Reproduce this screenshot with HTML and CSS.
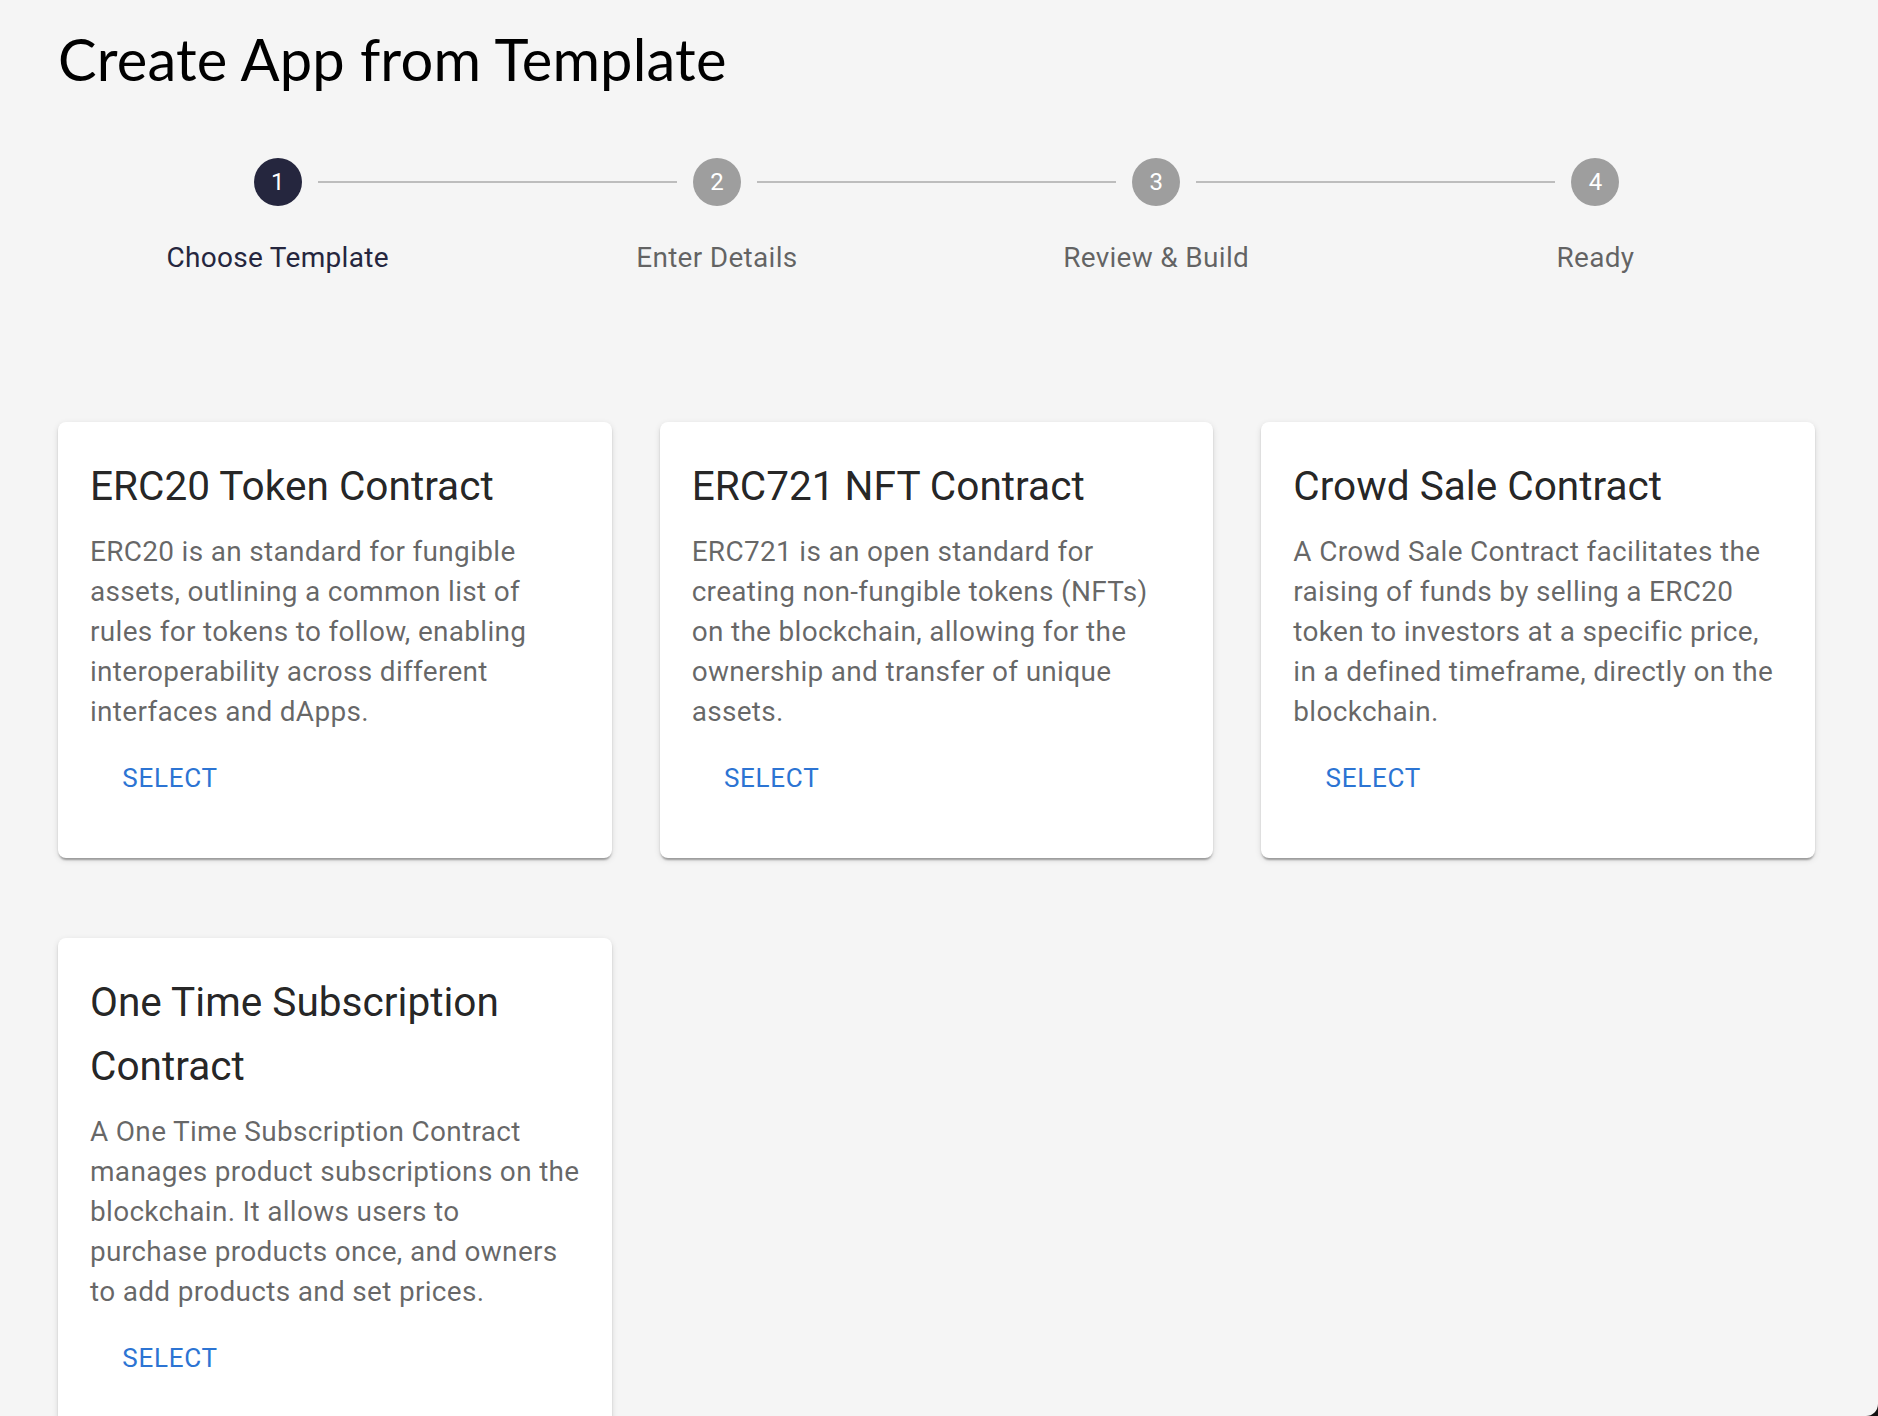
FILE: index.html
```html
<!DOCTYPE html>
<html lang="en">
<head>
<meta charset="utf-8">
<title>Create App from Template</title>
<link rel="stylesheet" href="styles.css">
</head>
<body>
<main class="page">
  <h1 class="page-title">Create App from Template</h1>

  <ol class="stepper">
    <li class="step step-active">
      <span class="step-icon">1</span>
      <span class="step-label">Choose Template</span>
    </li>
    <li class="step">
      <span class="step-connector"></span>
      <span class="step-icon">2</span>
      <span class="step-label">Enter Details</span>
    </li>
    <li class="step">
      <span class="step-connector"></span>
      <span class="step-icon">3</span>
      <span class="step-label">Review &amp; Build</span>
    </li>
    <li class="step">
      <span class="step-connector"></span>
      <span class="step-icon">4</span>
      <span class="step-label">Ready</span>
    </li>
  </ol>

  <section class="cards">
    <article class="card">
      <div class="card-content">
        <h2 class="card-title">ERC20 Token Contract</h2>
        <p class="card-text">ERC20 is an standard for fungible assets, outlining a common list of rules for tokens to follow, enabling interoperability across different interfaces and dApps.</p>
        <div class="card-actions"><button class="btn-select" type="button">Select</button></div>
      </div>
    </article>
    <article class="card">
      <div class="card-content">
        <h2 class="card-title">ERC721 NFT Contract</h2>
        <p class="card-text">ERC721 is an open standard for creating non-fungible tokens (NFTs) on the blockchain, allowing for the ownership and transfer of unique assets.</p>
        <div class="card-actions"><button class="btn-select" type="button">Select</button></div>
      </div>
    </article>
    <article class="card">
      <div class="card-content">
        <h2 class="card-title">Crowd Sale Contract</h2>
        <p class="card-text">A Crowd Sale Contract facilitates the raising of funds by selling a ERC20 token to investors at a specific price, in a defined timeframe, directly on the blockchain.</p>
        <div class="card-actions"><button class="btn-select" type="button">Select</button></div>
      </div>
    </article>
    <article class="card">
      <div class="card-content">
        <h2 class="card-title">One Time Subscription Contract</h2>
        <p class="card-text">A One Time Subscription Contract manages product subscriptions on the blockchain. It allows users to purchase products once, and owners to add products and set prices.</p>
        <div class="card-actions"><button class="btn-select" type="button">Select</button></div>
      </div>
    </article>
  </section>
</main>
<div class="window-corner"></div>
</body>
</html>
```

FILE: styles.css
```css
* { box-sizing: border-box; }

html, body {
  margin: 0;
  padding: 0;
  background: #f5f5f5;
}

body {
  font-family: Roboto, "Liberation Sans", Arial, sans-serif;
  color: rgba(0, 0, 0, 0.87);
  overflow: hidden;
  height: 1416px;
}

.page {
  width: 1757px;
  margin-left: 58px;
  padding-top: 21px;
}

.page-title {
  margin: 0;
  font-family: Lato, "Noto Sans", sans-serif;
  font-weight: 400;
  font-size: 57.8px;
  line-height: 76px;
  color: #000;
  letter-spacing: 0.2px;
}

/* Stepper */
.stepper {
  list-style: none;
  margin: 61px 0 0;
  padding: 0;
  display: grid;
  grid-template-columns: repeat(4, 1fr);
}

.step {
  position: relative;
  display: flex;
  flex-direction: column;
  align-items: center;
}

.step-connector {
  position: absolute;
  top: 23px;
  left: calc(-50% + 40px);
  right: calc(50% + 40px);
  height: 2px;
  background: #bdbdbd;
}

.step-icon {
  width: 48px;
  height: 48px;
  border-radius: 50%;
  background: #9e9e9e;
  color: #fff;
  font-size: 24px;
  line-height: 48px;
  text-align: center;
}

.step-label {
  margin-top: 32px;
  font-size: 28px;
  line-height: 40px;
  color: rgba(0, 0, 0, 0.6);
  letter-spacing: 0.3px;
}

.step-active .step-icon {
  background: #25263e;
}

.step-active .step-label {
  color: #25263e;
}

/* Cards */
.cards {
  margin-top: 144px;
  display: grid;
  grid-template-columns: repeat(3, 1fr);
  column-gap: 48px;
  row-gap: 80px;
  align-items: start;
}

.card {
  background: #fff;
  border-radius: 8px;
  box-shadow: 0 4px 2px -2px rgba(0, 0, 0, 0.2), 0 2px 2px 0 rgba(0, 0, 0, 0.14), 0 2px 6px 0 rgba(0, 0, 0, 0.12);
}

.card-content {
  padding: 32px;
}

.card-title {
  margin: 0 0 14px;
  font-size: 40.6px;
  line-height: 64px;
  font-weight: 400;
  color: rgba(0, 0, 0, 0.87);
}

.card-text {
  margin: 0;
  font-size: 28px;
  line-height: 40px;
  color: rgba(0, 0, 0, 0.6);
  letter-spacing: 0.3px;
}

.card-actions {
  display: flex;
  align-items: center;
  padding: 16px;
}

.btn-select {
  min-width: 128px;
  padding: 8px 10px;
  border: 0;
  background: transparent;
  font-family: Roboto, "Liberation Sans", Arial, sans-serif;
  font-size: 26px;
  line-height: 45.5px;
  font-weight: 400;
  letter-spacing: 0.74px;
  text-transform: uppercase;
  color: #2c74d3;
  border-radius: 8px;
  cursor: pointer;
}

.window-corner {
  position: fixed;
  right: 0;
  bottom: 0;
  width: 12px;
  height: 12px;
  background: #111;
}

.window-corner::before {
  content: "";
  position: absolute;
  inset: 0;
  background: #f5f5f5;
  border-bottom-right-radius: 12px;
}
```
